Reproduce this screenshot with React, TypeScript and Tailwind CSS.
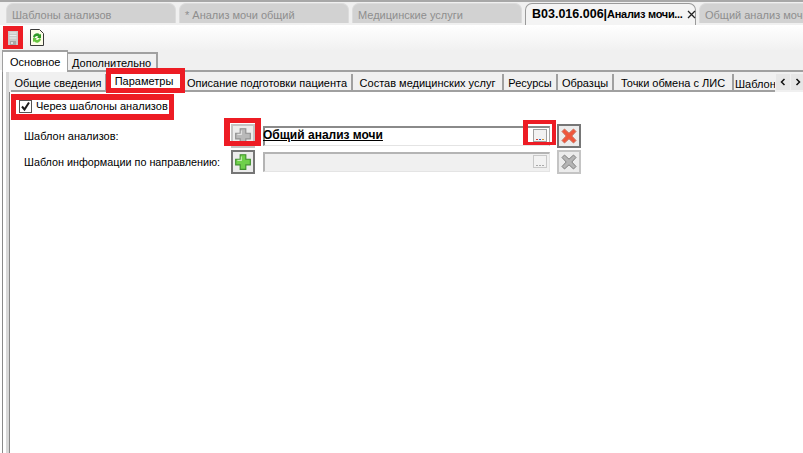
const font = { fontFamily: '"Liberation Sans", Arial, sans-serif' };

const docTabs = ['Шаблоны анализов', '* Анализ мочи общий', 'Медицинские услуги'];

const innerTabs = [
  { label: 'Общие сведения', w: 'w-[96px]' },
  { label: 'Параметры', w: 'w-[76px]', active: true },
  { label: 'Описание подготовки пациента', w: 'w-[170px]' },
  { label: 'Состав медицинских услуг', w: 'w-[151px]' },
  { label: 'Ресурсы', w: 'w-[54px]' },
  { label: 'Образцы', w: 'w-[56px]' },
  { label: 'Точки обмена с ЛИС', w: 'w-[120px]' },
];

function Plus({ on }: { on: boolean }) {
  const fill = on ? '#6fd04a' : '#b9b9b9';
  const edge = on ? '#3f8f2c' : '#8f8f8f';
  return (
    <svg width="18" height="18" viewBox="0 0 16 16">
      <path d="M5.500 1.500h5v4h4v5h-4v4h-5v-4h-4v-5h4z" fill={fill} stroke={edge} strokeWidth="1" />
      <path d="M6.500 3v3.500H3" fill="none" stroke="#ffffff" strokeOpacity="0.6" />
    </svg>
  );
}

function Cross({ on }: { on: boolean }) {
  const fill = on ? '#f0553a' : '#b5b5b5';
  const edge = on ? '#c9705e' : '#808080';
  return (
    <svg width="18" height="18" viewBox="0 0 18 18">
      <path d="M2 4.500 4.500 2 9 6.200 13.500 2 16 4.500 11.800 9 16 13.500 13.500 16 9 11.800 4.500 16 2 13.500 6.200 9z" fill={fill} stroke={edge} strokeWidth="1" />
    </svg>
  );
}

function SmallButton({ children, muted }: { children: React.ReactNode; muted?: boolean }) {
  return (
    <div className={`flex h-6 w-6 shrink-0 items-center justify-center border-2 bg-[#ececec] ${muted ? 'border-[#c4c4c4]' : 'border-[#767676]'}`}>
      {children}
    </div>
  );
}

function Dots({ muted }: { muted?: boolean }) {
  return (
    <div className={`-mt-[3px] ml-auto mr-[2px] flex h-[13px] w-[14px] shrink-0 items-end justify-center border bg-[#f2f2f2] pb-[1px] ${muted ? 'border-[#c8c8c8]' : 'border-[#a0a0a0]'}`}>
      <div className="flex gap-[1px]">
        <span className={`h-[1px] w-[2px] ${muted ? 'bg-[#aaaaaa]' : 'bg-[#d04030]'}`} />
        <span className={`h-[1px] w-[2px] ${muted ? 'bg-[#aaaaaa]' : 'bg-[#3060c0]'}`} />
        <span className={`h-[1px] w-[2px] ${muted ? 'bg-[#aaaaaa]' : 'bg-[#d09030]'}`} />
      </div>
    </div>
  );
}

function Chevron({ d }: { d: string }) {
  return (
    <div className="flex h-[16px] w-[14px] shrink-0 items-center justify-center bg-[#e6e6e6]">
      <svg width="6" height="8" viewBox="0 0 6 8">
        <path d={d} fill="none" stroke="#111111" strokeWidth="1.500" />
      </svg>
    </div>
  );
}

export default function App() {
  return (
    <div style={font} className="relative h-[453px] w-[803px] overflow-hidden bg-white text-[11px] text-black">
      {/* document tabs */}
      <div className="flex h-[25px] gap-[3px] overflow-hidden border-t-2 border-[#a8a8a8] bg-[#f0f0f0] pl-[6px] pt-[1px]">
        {docTabs.map((t) => (
          <div key={t} className="h-[20px] w-[170px] shrink-0 whitespace-nowrap rounded-t-[7px] border border-b-0 border-[#dcdcdc] bg-[#d2d2d2] pl-[5px] pt-[3px] text-[11px] text-[#8e8e8e]">
            {t}
          </div>
        ))}
        <div className="flex h-[22px] w-[171px] shrink-0 items-center whitespace-nowrap rounded-t-[7px] border border-b-0 border-[#9a9a9a] bg-[#f4f4f4] pl-[6px]">
          <span className="text-[12.5px] font-bold">В03.016.006|</span>
          <span className="text-[11px] font-bold tracking-[-0.3px]">Анализ мочи...</span>
          <svg className="ml-[4px] shrink-0" width="9" height="9" viewBox="0 0 9 9">
            <path d="M1 1 8 8M8 1 1 8" stroke="#222222" strokeWidth="1.300" />
          </svg>
        </div>
        <div className="h-[20px] w-[120px] shrink-0 whitespace-nowrap rounded-tl-[7px] border border-b-0 border-[#dcdcdc] bg-[#d2d2d2] pl-[5px] pt-[3px] text-[11px] text-[#8e8e8e]">
          Общий анализ мочи
        </div>
      </div>

      {/* toolbar */}
      <div className="flex h-[25px] items-center gap-[7px] bg-gradient-to-b from-white to-[#f1f1f1] pl-[3px]">
        <div className="flex h-[23px] w-[20px] items-center justify-center bg-[#ed1c24]">
          <svg width="10" height="14" viewBox="0 0 10 14">
            <path d="M0 0h10v14H0z" fill="#c9c9c9" />
            <path d="M1.500 1.500h7v1h-7zM1.500 4h7v1h-7zM1.500 6.500h7v1h-7z" fill="#ececec" />
            <path d="M2 10h6v4H2z" fill="#a6a6a6" />
            <path d="M3 11h2v2H3z" fill="#dddddd" />
          </svg>
        </div>
        <svg width="14" height="17" viewBox="0 0 14 17">
          <path d="M0.500 0.500h9l4 4v12h-13z" fill="#fdfde8" stroke="#3a3a3a" />
          <path d="M3 8a4 4 0 0 1 7-2.300l1-1V9H7l1.300-1.300A2.300 2.300 0 0 0 4.500 9z" fill="#2f9a26" />
          <path d="M11 10a4 4 0 0 1-7 2.300l-1 1V9h4l-1.300 1.300A2.300 2.300 0 0 0 9.500 9z" fill="#66c63f" />
        </svg>
      </div>

      {/* outer tabs */}
      <div className="relative z-10 flex h-[20px] items-start bg-[#f0f0f0] pl-[2px]">
        <div className="h-[22px] w-[66px] shrink-0 border border-b-0 border-t-2 border-[#a0a0a0] bg-white pl-[7px] pt-[2px] text-[11px]">Основное</div>
        <div className="mt-[2px] h-[18px] w-[90px] shrink-0 border-r-2 border-t-2 border-[#a0a0a0] pl-[4px] pt-[1px] text-[11px]">Дополнительно</div>
      </div>

      {/* outer panel */}
      <div className="ml-[2px] h-[383px] border-l border-[#8a8a8a] bg-white pl-[3px]">
        <div className="flex h-full flex-col border-l-[3px] border-t-2 border-l-[#d8d8d8] border-t-[#a0a0a0]">
          {/* inner tabs */}
          <div className="flex h-[20px] shrink-0 items-start overflow-hidden bg-[#f0f0f0] pl-[2px] pt-[2px]">
            {innerTabs.map((t) => (
              <div
                key={t.label}
                className={`${t.w} flex h-[18px] shrink-0 items-center justify-center whitespace-nowrap border-r-2 border-[#a0a0a0] ${t.active ? 'bg-white pb-[3px]' : 'border-b-2 bg-[#f0f0f0] pt-[2px]'}`}
              >
                {t.label}
              </div>
            ))}
            <div className="h-[18px] w-[41px] shrink-0 overflow-hidden whitespace-nowrap border-b-2 border-[#a0a0a0] pl-[1px] pt-[2px]">Шаблон</div>
            <div className="ml-[1px] flex gap-[1px]">
              <Chevron d="M4.500 1 1.500 4 4.500 7" />
              <Chevron d="M1.500 1 4.500 4 1.500 7" />
            </div>
          </div>

          {/* content */}
          <div className="flex-1 border-l border-[#888888] bg-white pl-[9px]">
            <div className="mt-[6px] flex h-[16px] items-center gap-[4px]">
              <div className="flex h-[13px] w-[13px] items-center justify-center border border-[#555555] bg-white">
                <svg width="11" height="11" viewBox="0 0 11 11">
                  <path d="M2 5.500 4.500 8.500 9 1.500" fill="none" stroke="#1a1a1a" strokeWidth="2" />
                </svg>
              </div>
              <span className="whitespace-nowrap">Через шаблоны анализов</span>
            </div>

            <div className="mt-[10px] flex h-[24px] items-center">
              <span className="w-[212px] shrink-0 whitespace-nowrap pl-[5px]">Шаблон анализов:</span>
              <SmallButton muted><Plus on={false} /></SmallButton>
              <div className="ml-[8px] flex h-[20px] w-[287px] items-center border-b border-l-2 border-r border-t-2 border-b-[#e4e4e4] border-l-[#8a8a8a] border-r-[#a8a8a8] border-t-[#8a8a8a] bg-white">
                <span className="-ml-[2px] -mt-[3px] text-[12px] font-bold underline">Общий анализ мочи</span>
                <Dots />
              </div>
              <div className="ml-[7px]"><SmallButton><Cross on /></SmallButton></div>
            </div>

            <div className="mt-[2px] flex h-[24px] items-center">
              <span className="w-[212px] shrink-0 whitespace-nowrap pl-[5px] text-[10.8px]">Шаблон информации по направлению:</span>
              <SmallButton><Plus on /></SmallButton>
              <div className="ml-[8px] flex h-[20px] w-[287px] items-center border-b border-l-2 border-r border-t-2 border-b-[#e4e4e4] border-l-[#b4b4b4] border-r-[#e4e4e4] border-t-[#b4b4b4] bg-[#f0f0f0]">
                <Dots muted />
              </div>
              <div className="ml-[7px]"><SmallButton muted><Cross on={false} /></SmallButton></div>
            </div>
          </div>
        </div>
      </div>

      {/* red annotation frames */}
      <div className="pointer-events-none absolute left-[106px] top-[68px] z-20 h-[25px] w-[79px] border-x-[5px] border-b-[5px] border-t-[6px] border-[#ed1c24]" />
      <div className="pointer-events-none absolute left-[11px] top-[94px] z-20 h-[26px] w-[163px] border-x-[5px] border-y-[6px] border-[#ed1c24]" />
      <div className="pointer-events-none absolute left-[224px] top-[118px] z-20 h-[28px] w-[37px] border-x-[6px] border-y-[5px] border-[#ed1c24]" />
      <div className="pointer-events-none absolute left-[523px] top-[120px] z-20 h-[25px] w-[33px] border-b-[3px] border-l-[5px] border-r-[4px] border-t-[4px] border-[#ed1c24]" />
    </div>
  );
}
